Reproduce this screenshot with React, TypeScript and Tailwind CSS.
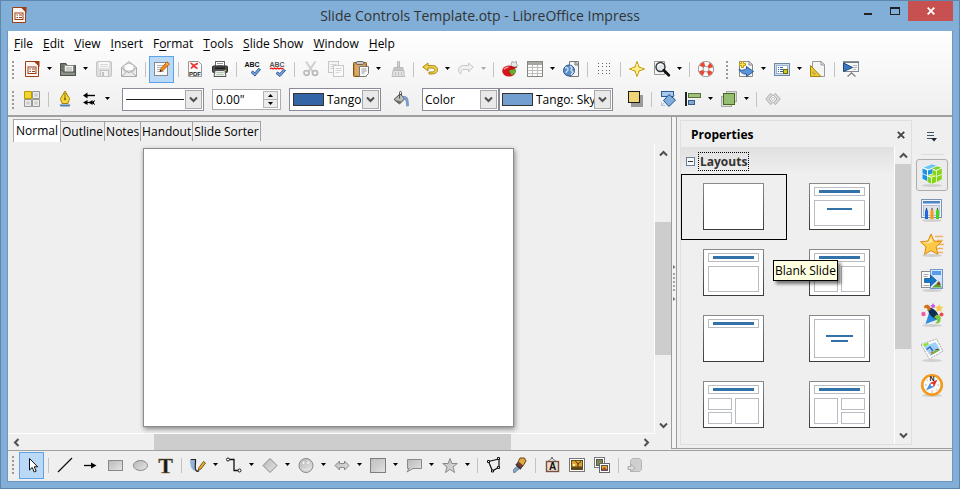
import React from "react";
import type { ReactNode } from "react";

/* ---------- icon drawings, 16 x 16 ---------- */

const docIcon = (
  <>
    <path d="M1.5 .5H11L14.5 4.500V15.500H1.500z" fill="#fdf6f2" stroke="#9c3f16" />
    <path d="M9.500 0H15.500V6z" fill="#9c3f16" />
    <rect x="4" y="6" width="8" height="6.500" fill="#fff" stroke="#9c3f16" />
    <path d="M5.500 8H7M8 8h3M5.500 10.500H7M8 10.500h3" stroke="#9c3f16" />
  </>
);

const icons: Record<string, ReactNode> = {
  impress: docIcon,
  open: (
    <>
      <path d="M.5 2.500H6l1.500 2H15.500V14.500H.500z" fill="#6f756c" stroke="#4c5149" />
      <path d="M4.500 4.500h9v7h-9z" fill="#f4f4f2" stroke="#8b8f88" />
      <path d="M6 7h6M6 9h6" stroke="#a8aba5" />
      <path d="M.5 9.500h2l1 1.500h12v3.500H.500z" fill="#8b9186" stroke="#4c5149" />
    </>
  ),
  save: (
    <>
      <rect x=".5" y=".5" width="15" height="15" rx="1.500" fill="#dedede" stroke="#c4c4c4" />
      <rect x="3" y="1" width="10" height="6" fill="#fafafa" />
      <path d="M4 3.500h8M4 5.500h8" stroke="#d8d8d8" />
      <rect x="4.500" y="9.500" width="8" height="6" fill="#f2f2f2" stroke="#c4c4c4" />
      <rect x="6" y="11" width="2" height="4" fill="#c0c0c0" />
    </>
  ),
  mail: (
    <>
      <path d="M.5 6.500L8 .5l7.500 6v9H.500z" fill="#ededed" stroke="#aaa" />
      <path d="M3 4.500L8 2l5 2.500V10H3z" fill="#fff" stroke="#bbb" />
      <path d="M.5 6.500L8 12l7.500-5.500M.5 15.500L6 10.500M15.500 15.500L10 10.500" fill="none" stroke="#aaa" />
    </>
  ),
  edit: (
    <>
      <rect x=".5" y="1.500" width="13" height="13" fill="#fafafa" stroke="#888" />
      <path d="M3 4.500h7M3 6.500h5M3 8.500h3M3 10.500h7" stroke="#b5b5b5" />
      <path d="M6 10.500l1-3L13 .8l2.500 2.200L9 9.500z" fill="#f08a1c" stroke="#b0560a" strokeWidth=".8" />
      <path d="M5.500 11l.8-2.500 1.600 1.500z" fill="#222" />
      <path d="M12 2l2.300 2" stroke="#f9c37d" />
    </>
  ),
  pdf: (
    <>
      <path d="M1.500 .5h10l3 3v12h-13z" fill="#fbfbfb" stroke="#999" />
      <path d="M3.500 2c2 .5 3 4 7 5.500M11 2.500C8.500 3 6 5 4 7.500" fill="none" stroke="#e33" strokeWidth="1.700" />
      <text x="8" y="14.500" textAnchor="middle" className="font-['Liberation_Sans',sans-serif] text-[6px] font-bold" fill="#222">PDF</text>
    </>
  ),
  print: (
    <>
      <rect x="3.500" y=".5" width="9" height="6" fill="#fff" stroke="#666" />
      <path d="M5 2.500h6M5 4.500h6" stroke="#999" />
      <rect x=".5" y="5" width="15" height="6.500" rx="1" fill="#4c4f4b" stroke="#2b2d2a" />
      <rect x="3" y="6.500" width="10" height="1.500" fill="#1b1c1b" />
      <path d="M3 9.500h10l1 6H2z" fill="#e9ece7" stroke="#555" />
      <path d="M4.500 11.500h7M4.500 13.500h7" stroke="#b4c6ab" />
      <rect x="12.500" y="9" width="1.500" height="1" fill="#a8e060" />
    </>
  ),
  spell: (
    <>
      <text x="-.5" y="6" className="font-['Liberation_Sans',sans-serif] text-[7px] font-bold" fill="#111">ABC</text>
      <path d="M6 11.500l1.800-1.500 2 2L13.500 7.500l2 1L10 15z" fill="#76a3dc" stroke="#28508c" strokeWidth=".9" />
    </>
  ),
  spellauto: (
    <>
      <text x="-.5" y="6" className="font-['Liberation_Sans',sans-serif] text-[7px] font-bold" fill="#555">ABC</text>
      <path d="M0 8l1.500-1L3 8l1.500-1L6 8l1.500-1L9 8l1.500-1L12 8l1.500-1" fill="none" stroke="#f11" strokeWidth="1.100" />
      <path d="M6 12.500l1.800-1.500 2 1.500L13.500 8.500l2 1L10 15.500z" fill="#76a3dc" stroke="#28508c" strokeWidth=".9" />
    </>
  ),
  cut: (
    <>
      <path d="M3 .5l6.500 10M12.500 .5L5.500 10.500" stroke="#cfcfcf" strokeWidth="2" />
      <ellipse cx="3.500" cy="12" rx="2.500" ry="2.300" fill="none" stroke="#bbb" strokeWidth="1.800" />
      <ellipse cx="12" cy="12" rx="2.500" ry="2.300" fill="none" stroke="#bbb" strokeWidth="1.800" />
    </>
  ),
  copy: (
    <>
      <rect x=".5" y=".5" width="10" height="11" fill="#f5f5f5" stroke="#c8c8c8" />
      <path d="M2.500 3.500h6M2.500 5.500h6M2.500 7.500h3" stroke="#d5d5d5" />
      <rect x="5.500" y="4.500" width="10" height="11" fill="#fafafa" stroke="#c8c8c8" />
      <path d="M7.500 7.500h6M7.500 9.500h6M7.500 11.500h4" stroke="#d5d5d5" />
    </>
  ),
  paste: (
    <>
      <rect x=".5" y="1.500" width="13" height="14" rx="1" fill="#c98d42" stroke="#7d5216" />
      <rect x="2" y="3.500" width="10" height="11" fill="#dca763" />
      <rect x="3.500" y=".5" width="7" height="3" rx="1" fill="#c9c9c6" stroke="#666" />
      <path d="M6.500 5.500h9v7l-3 3h-6z" fill="#fafafa" stroke="#777" />
      <path d="M8.500 8h5M8.500 10h5M8.500 12h3" stroke="#999" />
    </>
  ),
  brush: (
    <>
      <path d="M8.500 .5h2V6h-2z" fill="#d5d5d5" stroke="#b9b9b9" />
      <path d="M5 6.500h9V9H4.500z" fill="#c8c8c8" stroke="#b9b9b9" />
      <path d="M4 9.500h11v4l1 2H3z" fill="#e2e2e2" stroke="#bdbdbd" />
      <path d="M6.500 11v4M9.500 11v4M12.500 11v4" stroke="#c4c4c4" />
    </>
  ),
  undo: <path d="M.8 6L6 2v2.500h4.500c3 0 5 1.500 5 4.200 0 2.600-2 4.300-5.500 4.300H7v-2h3c1.800 0 2.800-.8 2.800-2s-1-2-2.800-2H6V10z" fill="#eed049" stroke="#a88207" strokeWidth=".9" />,
  redo: <path d="M15.200 6L10.500 2v2.500H6c-3.500 0-5.500 1.500-5.500 4.500 0 1.800.8 3 2.500 4-.5-3 .5-4.500 3-4.500h4.500V11z" fill="#f0f0f0" stroke="#c8c8c8" />,
  chart: (
    <>
      <path d="M9 3.500l1-3 2 1 2.500-1V3l1.500 1.500-2 1.500-4-.5z" fill="#e8e8e8" stroke="#999" strokeWidth=".8" />
      <ellipse cx="7" cy="10" rx="6.800" ry="5.500" fill="#d3151c" />
      <path d="M2 8.500c1-2 3-2.500 4.500-2.300" stroke="#f79a92" strokeWidth="1.500" fill="none" />
      <path d="M7 9.500l6.500-1.500c.5 3-1 5.500-4 6z" fill="#56b92c" />
      <path d="M8 5.500l3 1.500 4-1" stroke="#a30d10" fill="none" />
    </>
  ),
  table: (
    <>
      <rect x=".5" y=".5" width="15" height="15" fill="#fdfdfd" stroke="#84867f" />
      <rect x="1" y="1" width="14" height="3" fill="#a5a7a2" />
      <path d="M1 6.500h14M1 9.500h14M1 12.500h14M5.500 4v11M10.500 4v11" stroke="#bcbeb8" />
    </>
  ),
  globe: (
    <>
      <path d="M6.500 .5h9v15h-9z" fill="#f5f5f5" stroke="#777" />
      <path d="M12 .5v3.500h3.500z" fill="#ddd" stroke="#777" />
      <circle cx="6" cy="9.500" r="5.500" fill="#5b8cc4" stroke="#2c578f" />
      <path d="M2 7c2-1 3 0 3 1.500S3 10 3 12M7 5l2 2-1 2 2 2-2 3" stroke="#c5dcf3" fill="none" strokeWidth="1.500" />
    </>
  ),
  gridDots: <path d="M2 2.500h1M6 2.500h1M10 2.500h1M13 2.500h1M2 5.500h1M6 5.500h1M10 5.500h1M13 5.500h1M2 9.500h1M6 9.500h1M10 9.500h1M13 9.500h1M2 12.500h1M6 12.500h1M10 12.500h1M13 12.500h1" stroke="#666" fill="none" />,
  star4: (
    <>
      <path d="M8 .5L10 6l5.500 2L10 10l-2 5.500L6 10 .5 8 6 6z" fill="#fbe25c" stroke="#c49a0a" />
      <path d="M8 3v10M3 8h10" stroke="#fff7c5" />
    </>
  ),
  zoom: (
    <>
      <path d="M.5 .5h10v13H.500z" fill="#f5f5f5" stroke="#999" />
      <circle cx="6.500" cy="6" r="4.500" fill="#e0e6ea" stroke="#333" strokeWidth="1.400" />
      <path d="M4 5c1-2 3-2 4-1.500" stroke="#fff" fill="none" strokeWidth="1.200" />
      <path d="M9.800 9.300l5 5" stroke="#111" strokeWidth="2.800" strokeLinecap="round" />
    </>
  ),
  help: (
    <>
      <circle cx="8" cy="8" r="5.300" fill="none" stroke="#888" strokeWidth="5.600" />
      <circle cx="8" cy="8" r="5.300" fill="none" stroke="#fafafa" strokeWidth="4" />
      <circle cx="8" cy="8" r="5.300" fill="none" stroke="#e84530" strokeWidth="4" strokeDasharray="4 4.325" strokeDashoffset="-2.200" />
    </>
  ),
  newSlide: (
    <>
      <path d="M1.500 .5h10l3 3v12h-13z" fill="#f6f6f6" stroke="#888" />
      <path d="M11 .5V4h3.500" fill="#ddd" stroke="#888" />
      <path d="M1 8c2 2 4.500 1 7.500 0V5.500l7 5-7 5V13C6 13.500 2.500 12 1 8z" fill="#5b94d8" stroke="#1f4f8e" strokeWidth=".9" />
      <path d="M3.500 .5h2v2h2v2h-2v2h-2v-2h-2v-2h2z" fill="#fbe94c" stroke="#bf9c08" />
    </>
  ),
  layout: (
    <>
      <rect x=".5" y="2.500" width="15" height="12" fill="#c9dcf0" stroke="#71869c" />
      <rect x="2.500" y="4.500" width="11" height="8" fill="#fafdff" stroke="#9db3c9" />
      <path d="M4 6.500h1M6 6.500h3M4 8.500h1M6 8.500h3M4 10.500h1M6 10.500h3" stroke="#34689e" />
      <rect x="9.500" y="8.500" width="4" height="4" fill="#d3c917" stroke="#6b6c05" />
    </>
  ),
  ruler: (
    <>
      <path d="M2.500 .5h9l3 3v12h-12z" fill="#f4f4f4" stroke="#999" />
      <path d="M11 .5V4h3.500" fill="#ddd" stroke="#999" />
      <path d="M.5 4.500l10.500 11H.500z" fill="#eccb38" stroke="#a8830a" />
      <path d="M3 10.500l2.500 2.500H3z" fill="#fff" stroke="#a8830a" strokeWidth=".7" />
    </>
  ),
  present: (
    <>
      <rect x="1.500" y="1.500" width="14" height="9" fill="#f4f6f8" stroke="#848a90" />
      <path d="M0 1h16" stroke="#70767c" strokeWidth="1.600" />
      <path d="M10 4.500h4M10 6.500h4M10 8.500h3" stroke="#b4bac0" />
      <path d="M.5 2l9 4.500-9 4z" fill="#3d78be" stroke="#1b467f" />
      <path d="M8.500 11v2M8.500 12l-4 3.500M8.500 12l4 3.500" stroke="#868686" strokeWidth="1.300" />
    </>
  ),
  displayGrid: (
    <>
      <path d="M8.500 .5h7v7h-7zM.5 8.500h7v7h-7zM8.500 8.500h7v7h-7z" fill="#ebebe8" stroke="#969893" />
      <path d="M.5 .5h7v7h-7z" fill="#f2d530" stroke="#c19a00" />
      <path d="M10.500 2.500h3v3h-3zM2.500 10.500h3v3h-3zM10.500 10.500h3v3h-3z" fill="#ccc" />
    </>
  ),
  pen: (
    <>
      <path d="M8 0l4.500 7.500c0 2-1.500 3-1.500 5H5c0-2-1.500-3-1.500-5z" fill="#f6d63a" stroke="#a57f08" />
      <path d="M8 2v5" stroke="#8d7208" />
      <circle cx="8" cy="8" r="1.200" fill="#8d7208" />
      <path d="M2.500 13.500h11l-1 2h-9z" fill="#4c7cb4" />
    </>
  ),
  lineEnds: (
    <>
      <path d="M3 4.500h10" stroke="#000" strokeWidth="1.400" />
      <path d="M5.500 1.500v6L1 4.500z" fill="#000" />
      <path d="M3 11.500h9" stroke="#000" strokeWidth="1.200" />
      <path d="M5.500 9v5L1 11.500zM10.500 9v5L6.500 11.500z" fill="#000" />
      <path d="M10 11.500l3-2M10 11.500l3 2" stroke="#000" />
    </>
  ),
  bucket: (
    <>
      <path d="M1 8.500L7 3l5 4.500-5.500 5.500z" fill="#b9bcb6" stroke="#454842" />
      <path d="M6.500 7.500V1.500c0-1.500 2-1.500 2 0v3" fill="none" stroke="#555" />
      <path d="M1.500 9l5 3.500 2-2z" fill="#686c65" />
      <path d="M10 5.500c4-.5 5.500 1 5.500 9.500h-2c0-5-1-7-3-7.500z" fill="#7ba0d6" stroke="#5274a8" strokeWidth=".5" />
    </>
  ),
  shadow: (
    <>
      <rect x="4" y="4" width="12" height="12" fill="#9a9a9a" />
      <rect x="1.500" y=".5" width="11" height="11" fill="#efd573" stroke="#1b1b1b" />
    </>
  ),
  rotate: (
    <>
      <rect x="1.500" y=".5" width="12" height="5" fill="#a9c7ea" stroke="#2c5b96" />
      <path d="M9 3.500l6.500 5.500-6.500 6.500-5.500-6z" fill="#82ade0" stroke="#244f88" />
      <path d="M1.500 11v3.500h4M1.500 14.500l3-3M13.500 5l2-1" stroke="#b4c6da" fill="none" />
    </>
  ),
  align: (
    <>
      <path d="M1 1v14" stroke="#222" strokeWidth="2" />
      <rect x="3.500" y="2.500" width="12" height="4" fill="#a4c07d" stroke="#56743a" />
      <rect x="3.500" y="9.500" width="6" height="4" fill="#86a9d1" stroke="#365b8a" />
    </>
  ),
  arrange: (
    <>
      <rect x="5.500" y=".5" width="10" height="10" fill="#dcdcdc" stroke="#aaa" />
      <rect x=".5" y="5.500" width="10" height="10" fill="#dcdcdc" stroke="#aaa" />
      <rect x="2.500" y="2.500" width="11" height="11" fill="#97bd70" stroke="#44691f" />
    </>
  ),
  glueEdit: (
    <>
      <path d="M5.500 2.500L.8 8l4.700 5.500L7.500 12 4 8l3.500-4zM10.500 2.500L15.200 8l-4.700 5.500L8.500 12 12 8 8.500 4z" fill="#ddd" stroke="#a5a5a5" strokeWidth=".9" />
      <path d="M6 8h1M9 8h1M8 6v1M8 9v1" stroke="#999" />
    </>
  ),
  select: <path d="M5.500 1.500v11.500l2.700-2.500 2 4.500 2-.9-2-4.300h3.500z" fill="#fff" stroke="#111" />,
  line: <path d="M1 15L15 1" stroke="#111" strokeWidth="1.200" />,
  arrow: (
    <>
      <path d="M2 8.500h8" stroke="#000" strokeWidth="1.300" />
      <path d="M9 5.500v6l5.500-3z" fill="#000" />
    </>
  ),
  rect: <rect x="1.500" y="3.500" width="14" height="10" fill="url(#greyFill)" stroke="#898989" />,
  ellipse: <ellipse cx="8.500" cy="8.500" rx="7" ry="5" fill="url(#greyFill)" stroke="#898989" />,
  text: <text x="8.500" y="15.500" textAnchor="middle" className="font-['Liberation_Serif',serif] text-[22px] font-bold" fill="#171717" stroke="#8d7f4c" strokeWidth=".4">T</text>,
  curve: (
    <>
      <path d="M0 2h5l1 12c-4 0-6-4-6-12z" fill="#94b2d6" />
      <path d="M1 2.500h4.500c.5 4-1.500 8 .5 11 1 1 2 1 3 0" fill="none" stroke="#222" strokeWidth="1.200" />
      <path d="M8 13.500l1-3 4.500-6 2 1.500-4.500 6z" fill="#efad20" stroke="#583c08" strokeWidth=".8" />
    </>
  ),
  connector: (
    <>
      <path d="M3.500 2.500h4.500v11h4" fill="none" stroke="#111" strokeWidth="1.300" />
      <circle cx="2" cy="2.500" r="1.500" fill="#fff" stroke="#111" />
      <circle cx="13.500" cy="13.500" r="1.500" fill="#fff" stroke="#111" />
    </>
  ),
  diamond: <path d="M8 1.500L15 8.500l-7 7-7-7z" fill="url(#greyFill)" stroke="#898989" />,
  smiley: (
    <>
      <circle cx="8" cy="8.500" r="7" fill="url(#greyFill)" stroke="#898989" />
      <path d="M5.500 4.500v2.500M10 4.500v2.500" stroke="#f4f4f4" strokeWidth="1.600" />
      <path d="M4 11c2 2 6 2 8 0" fill="none" stroke="#e6e6e6" />
    </>
  ),
  blockArrow: <path d="M1 8.500l4.500-4.500v2.500h5V4L15 8.500 10.500 13v-2.500h-5V13z" fill="url(#greyFill)" stroke="#898989" />,
  flowchart: (
    <>
      <rect x=".5" y="1.500" width="15" height="14" fill="url(#greyFill)" stroke="#7e7e7e" />
      <path d="M4.500 2v13M1 5.500h14" stroke="#cdcdcd" />
    </>
  ),
  callout: <path d="M1.500 2.500h14v9H7L1 15l2-3.500H1.500z" fill="url(#greyFill)" stroke="#898989" />,
  star: <path d="M8 1.500l1.800 5h5.500l-4.300 3.500 1.500 5.500L8 12.300 3.500 15.500 5 10 .7 6.500h5.500z" fill="url(#greyFill)" stroke="#898989" />,
  points: (
    <>
      <path d="M2.500 4.500l10.500-2.500v8l-6.500 4z" fill="none" stroke="#111" strokeWidth="1.200" />
      <path d="M1.500 3.500h2v2h-2zM11.500 .5h2v2h-2zM11.500 9.500h2v2h-2zM5.500 13h2v2h-2z" fill="#fff" stroke="#111" />
    </>
  ),
  glue: (
    <>
      <path d="M9 1l4.500 0 1.500 3-3 5-5-4z" fill="#e2a63e" stroke="#6d4514" />
      <path d="M7 5l5 4-3 3-3.500-3.500z" fill="#a12f24" stroke="#444" />
      <path d="M5 7l5 5" stroke="#3d3d3d" strokeWidth="2" fill="none" />
      <path d="M5.500 9.500l-3 3v3h1.500l4-3.500z" fill="#83a6c8" stroke="#47678a" strokeWidth=".6" />
    </>
  ),
  fontwork: (
    <>
      <path d="M4 4.500L8 1l4 3.500" fill="none" stroke="#777" />
      <circle cx="8" cy="1" r="1" fill="#666" />
      <rect x="2.500" y="4.500" width="12" height="10" fill="#e8ddcc" stroke="#795142" strokeWidth="1.400" />
      <text x="8.500" y="13" textAnchor="middle" className="font-['Liberation_Sans',sans-serif] text-[10px] font-bold" fill="#111">A</text>
    </>
  ),
  picture: (
    <>
      <rect x=".5" y="1.500" width="15" height="13" fill="#fff" stroke="#777" />
      <rect x="2.500" y="3.500" width="11" height="9" fill="#dfa032" stroke="#5f4c18" />
      <path d="M3 9.500h10v3H3z" fill="#5c471c" />
      <path d="M9 10V6.500L6.500 4.500M9 7l3-2.500" stroke="#4a3510" fill="none" />
      <circle cx="5" cy="8" r="1.300" fill="#fff09a" />
    </>
  ),
  gallery: (
    <>
      <rect x=".5" y=".5" width="10" height="10" fill="#fff" stroke="#777" />
      <rect x="2.500" y="2.500" width="6" height="6" fill="#7a8b4d" stroke="#555" />
      <rect x="5.500" y="6.500" width="10" height="9" fill="#fff" stroke="#666" />
      <rect x="7.500" y="8.500" width="6" height="5" fill="#e0ab36" stroke="#555" />
      <path d="M8 12l2.500-2 3 3H8z" fill="#b54b2a" />
    </>
  ),
  extrusion: (
    <>
      <path d="M3.500 3.500l2-2h7l2 2v9l-2 2h-9z" fill="#cfcfcf" stroke="#b5b5b5" />
      <path d="M1 9.500h3V7.500l4 3.500-4 3.500v-2H1z" fill="#ddd" stroke="#aaa" />
    </>
  ),
};

/* ---------- sidebar deck icons, 24 x 24 ---------- */

const floor = <ellipse cx="12" cy="22.500" rx="10" ry="1.500" fill="#cfcfcf" />;

const decks: { name: string; drawing: ReactNode }[] = [
  {
    name: "Properties",
    drawing: (
      <>
        {floor}
        <path d="M12 1l9.500 3.500v12L12 21.500 2.500 16.500v-12z" fill="#fff" />
        <path d="M12 1.200l4.500 1.600-8 3.400-5-1.600z" fill="#68c5f4" />
        <path d="M2.500 5.500l4.500 1.700v5l-4.500-2zM2.500 11l4.500 2v5l-4.500-2.200zM8 7.500l4.500-1.800v4.500L8 12z" fill="#1c94e6" />
        <path d="M7.500 13.500l3.500 1.200v6l-3.500-1.700zM17 3.300l4.500 1.500-5.500 2.200-4-1.500z" fill="#7fd12c" />
        <path d="M17 7.500l4.800-2V11L17 13zM12.500 7l3.800 1v5l-3.800-1.500zM17 13.800l4.800-2v4.500l-4.800 2.700zM11.800 14.500l4.500-1.500v6l-4.500 2z" fill="#86d418" />
        <path d="M7.500 12.500l4.500-1.500 4 1.500-4.500 1.500z" fill="#b6ea62" />
      </>
    ),
  },
  {
    name: "Slide Transition",
    drawing: (
      <>
        {floor}
        <rect x="1.500" y="1.500" width="20" height="18" fill="#f1f5fa" stroke="#7c93b4" />
        <rect x="3" y="3" width="17" height="2.500" fill="#5184c5" />
        <rect x="3.500" y="7.500" width="16" height="10" fill="#dfe4ec" stroke="#b5bfcf" />
        <path d="M5 21v-8l1.500-3 1.500 3v8z" fill="#2468d6" />
        <path d="M10.500 21v-8l1.500-3 1.500 3v8z" fill="#ef9a1a" />
        <path d="M16 21v-8l1.500-3 1.500 3v8z" fill="#3ed71d" />
        <path d="M5.700 11.500l.8-2 .8 2zM11.200 11.500l.8-2 .8 2zM16.700 11.500l.8-2 .8 2z" fill="#333" />
      </>
    ),
  },
  {
    name: "Custom Animation",
    drawing: (
      <>
        {floor}
        <path d="M15 3.500h8M17 7.500h6M18 11.500h6M17 15.500h6M17 19.500h6" stroke="#f3b25c" strokeWidth="1.400" />
        <path d="M11 1l3 7 7.500.8-5.500 5 1.800 7.500L11 17.500 4.500 21.500 6 14 .5 8.800 8 8z" fill="#ffc845" stroke="#dc8a14" />
        <path d="M11 4l2 5-6 1.500-4-1 5.500-.5z" fill="#ffe9a3" />
      </>
    ),
  },
  {
    name: "Master Pages",
    drawing: (
      <>
        {floor}
        <rect x="1.500" y="3.500" width="11" height="16" fill="#fafafa" stroke="#8e8e8e" />
        <path d="M3.500 6.500h5M3.500 8.500h4M3.500 17.500h6" stroke="#a9a9a9" />
        <rect x="10.500" y="1.500" width="12" height="19" fill="#d4e6fb" stroke="#7299c6" />
        <path d="M12 3h9v4h-9z" fill="#5c9be8" />
        <path d="M12 19.500l6-5 4 5z" fill="#5c9f2a" />
        <path d="M17 15l2-2 2 4h-4z" fill="#7a4d24" />
        <path d="M4.500 10.500h6V7l6 5.500-6 5.500v-3.500h-6z" fill="#1676c8" stroke="#0c4c88" strokeWidth=".7" />
      </>
    ),
  },
  {
    name: "Styles and Formatting",
    drawing: (
      <>
        {floor}
        <path d="M10 7l9 9-13.500 5z" fill="#2c8de0" />
        <ellipse cx="13.500" cy="10.500" rx="3.500" ry="7" transform="rotate(-42 13.500 10.500)" fill="#0e2f55" />
        <path d="M4 3c4-3 7 0 6.500 4l-3 1c0-3-1-3.500-3-2.500z" fill="#d07217" />
        <path d="M16 12c4-1 6 3 4 7-2 2-4 1.500-5 1 3-1 3-4-1-5.500z" fill="#7cc63b" />
        <path d="M19 1l1.200 2.600 3.300.3-2.500 2 .8 3L19 7.500 16.200 9l.8-3.200-2.400-2 3.300-.2z" fill="#fbc84a" />
        <path d="M13 0l1 2 1.500.3-1 1.200.2 1.800L13 4.500l-1.700.8.200-1.800-1.200-1.200L12 2z" fill="#c455e8" />
        <circle cx="3.500" cy="11" r="2.200" fill="#ee5ba8" />
        <circle cx="21.500" cy="11.500" r="2" fill="#f04b4b" />
      </>
    ),
  },
  {
    name: "Gallery",
    drawing: (
      <>
        {floor}
        <path d="M1 6.500L16.500 1l6.500 12-13.500 8z" fill="#fff" stroke="#a9a9a9" strokeDasharray="2 1" />
        <path d="M4 8.500L15.500 4l5 8-10 6z" fill="#9fd0fa" />
        <path d="M10 17.500l5-5 5.500-.5z" fill="#65b52a" />
        <path d="M3 6.500l5-2 1 1.800-5 2.500z" fill="#8fe02c" />
        <path d="M6.500 11.500l3.500-2.500 3 4" fill="none" stroke="#2f6fb3" strokeWidth="1.500" />
        <path d="M14 12l4-1.500 1 1.500z" fill="#8b3b1c" />
        <circle cx="12" cy="14.500" r="1.300" fill="#e07a1c" />
      </>
    ),
  },
  {
    name: "Navigator",
    drawing: (
      <>
        {floor}
        <circle cx="12" cy="12" r="9.800" fill="#fafafa" stroke="#f39a1c" strokeWidth="2.600" />
        <path d="M12 17v3M4.500 12H7M17 12h2.500M6.500 6.500l1.500 1.500M16 16l1.500 1.500" stroke="#b8c0c8" />
        <text x="12" y="7.500" textAnchor="middle" className="font-['Liberation_Sans',sans-serif] text-[7px] font-bold" fill="#222">N</text>
        <path d="M17.500 6.500l-3.500 7.500-4-4z" fill="#e0362c" />
        <path d="M6 17.500l4-7.500 4 4z" fill="#4e90dc" />
        <circle cx="12" cy="12" r="1.300" fill="#fff" />
      </>
    ),
  },
];

/* ---------- toolbar parts ---------- */

function Glyph({ name }: { name: string }) {
  return (
    <svg viewBox="0 0 16 16" className="size-4 shrink-0 overflow-visible" fill="none" aria-hidden="true">
      {icons[name]}
    </svg>
  );
}

function Tool({ name, active = false }: { name: string; active?: boolean }) {
  return (
    <button
      type="button"
      aria-label={name}
      aria-pressed={active}
      className={
        active
          ? "flex h-[27px] w-[25px] shrink-0 items-start border border-[#5da3e8] bg-[#b9d9f7] pl-1 pt-1"
          : "flex h-[27px] w-[25px] shrink-0 items-start pl-[5px] pt-[5px]"
      }
    >
      <Glyph name={name} />
    </button>
  );
}

function Drop({ muted = false }: { muted?: boolean }) {
  return (
    <button type="button" aria-label="More" className="flex h-[27px] w-[11px] shrink-0 items-start justify-center pt-[11px]">
      <svg viewBox="0 0 5 3" className="h-[3px] w-[5px]" aria-hidden="true">
        <path d="M0 0h5L2.500 3z" fill={muted ? "#a8a8a8" : "#000"} />
      </svg>
    </button>
  );
}

function Sep() {
  return <div className="mx-[3px] box-content h-[15px] w-px shrink-0 border-r border-[#c3c3c3]" />;
}

function Grip() {
  return <div className="mr-1 h-[18px] w-[3px] shrink-0 bg-[repeating-linear-gradient(to_bottom,#9a9a9a_0_2px,transparent_2px_4px)] bg-[length:2px_100%] bg-no-repeat" />;
}

/* "|" is a separator, "v" a drop-down arrow, a leading "*" marks a pressed button */
function Tools({ items }: { items: string }) {
  return (
    <>
      {items.split(" ").map((item, i) => {
        if (item === "|") return <Sep key={i} />;
        if (item === "v") return <Drop key={i} />;
        if (item === "~v") return <Drop key={i} muted />;
        if (item[0] === "*") return <Tool key={i} name={item.slice(1)} active />;
        return <Tool key={i} name={item} />;
      })}
    </>
  );
}

function Chevron({ className }: { className?: string }) {
  return (
    <svg viewBox="0 0 9 7" className={"h-[7px] w-[9px] " + (className ?? "")} aria-hidden="true">
      <path d="M1 1.500l3.500 3.500L8 1.500" fill="none" stroke="#4f4f4f" strokeWidth="2" />
    </svg>
  );
}

function Combo({ label, value, width, pad, children }: { label: string; value: string; width: string; pad: string; children?: ReactNode }) {
  return (
    <div className={"relative h-[23px] shrink-0 border border-[#8a8a98] bg-white " + width}>
      <select aria-label={label} defaultValue={value} className={"h-full w-full appearance-none overflow-hidden bg-transparent pr-[18px] outline-none " + pad}>
        <option>{value}</option>
      </select>
      {children}
      <span className="pointer-events-none absolute inset-y-px right-px flex w-[17px] items-center justify-center border border-[#a9a9a9] bg-[#e9e9e9]">
        <Chevron />
      </span>
    </div>
  );
}

/* ---------- layout previews ---------- */

type Box = [number, number, number, number];
const head: Box = [5, 4, 50, 8];
const headBar: Box = [10, 7, 41, 3];

const layouts: { name: string; boxes: Box[]; bars: Box[] }[] = [
  { name: "Blank Slide", boxes: [], bars: [] },
  { name: "Title Slide", boxes: [head, [5, 17, 50, 25]], bars: [headBar, [18, 25, 25, 2]] },
  { name: "Title, Content", boxes: [head, [5, 17, 50, 25]], bars: [headBar] },
  { name: "Title and 2 Content", boxes: [head, [5, 17, 23, 25], [32, 17, 23, 25]], bars: [headBar] },
  { name: "Title Only", boxes: [head], bars: [headBar] },
  { name: "Centered Text", boxes: [[5, 4, 50, 38]], bars: [[17, 20, 27, 2], [22, 25, 17, 2]] },
  { name: "Title, 2 Content and Content", boxes: [head, [5, 17, 23, 11], [5, 31, 23, 11], [32, 17, 23, 25]], bars: [headBar] },
  { name: "Title, Content and 2 Content", boxes: [head, [5, 17, 23, 25], [32, 17, 23, 11], [32, 31, 23, 11]], bars: [headBar] },
];

function LayoutPreview({ boxes, bars }: { boxes: Box[]; bars: Box[] }) {
  return (
    <svg viewBox="0 0 61 47" className="h-[47px] w-[61px]" aria-hidden="true">
      <rect x=".5" y=".5" width="60" height="46" fill="#fff" stroke="url(#frame)" />
      {boxes.map(([x, y, w, h], i) => (
        <rect key={i} x={x + 0.5} y={y + 0.5} width={w} height={h} fill="#fff" stroke="#b9bcc2" />
      ))}
      {bars.map(([x, y, w, h], i) => (
        <rect key={i} x={x} y={y} width={w} height={h} fill="#3272a8" />
      ))}
    </svg>
  );
}

/* ---------- window parts ---------- */

function TitleBar() {
  return (
    <header className="flex h-[30px] shrink-0 items-start">
      <div className="flex w-[134px] pl-[10px] pt-[6px]">
        <svg viewBox="0 0 16 16" className="size-4" aria-hidden="true">
          <defs>
            <linearGradient id="greyFill" x1="0" y1="0" x2="1" y2="1">
              <stop offset="0" stopColor="#b9b9b9" />
              <stop offset="1" stopColor="#e4e4e4" />
            </linearGradient>
            <linearGradient id="frame" x1="0" y1="0" x2="0" y2="1">
              <stop offset="0" stopColor="#8a8a8a" />
              <stop offset="1" stopColor="#3c3c3c" />
            </linearGradient>
          </defs>
          {docIcon}
        </svg>
      </div>
      <h1 className="flex-1 pt-[5px] text-center text-[14px] leading-5 text-[#333]">Slide Controls Template.otp - LibreOffice Impress</h1>
      <div className="flex w-[134px] justify-end pr-[6px]">
        <button type="button" aria-label="Minimize" className="flex h-5 w-[27px] items-end justify-center pb-[6px]">
          <span className="h-[2px] w-2 bg-[#222]" />
        </button>
        <button type="button" aria-label="Maximize" className="flex h-5 w-[27px] items-center justify-center">
          <span className="h-2 w-[10px] border border-t-2 border-[#222]" />
        </button>
        <button type="button" aria-label="Close" className="flex h-5 w-[45px] items-center justify-center bg-[#c75050]">
          <svg viewBox="0 0 8 8" className="size-2" aria-hidden="true">
            <path d="M.7 .7l6.600 6.600M7.300 .7L.7 7.300" stroke="#fff" strokeWidth="1.800" />
          </svg>
        </button>
      </div>
    </header>
  );
}

const menus: [string, string, string][] = [
  ["", "F", "ile"],
  ["", "E", "dit"],
  ["", "V", "iew"],
  ["", "I", "nsert"],
  ["F", "o", "rmat"],
  ["", "T", "ools"],
  ["", "S", "lide Show"],
  ["", "W", "indow"],
  ["", "H", "elp"],
];

function MenuBar() {
  return (
    <nav className="flex h-[25px] items-center gap-[10px] pl-[6px]">
      {menus.map(([before, key, after]) => (
        <button key={key} type="button" className="whitespace-nowrap">
          {before}
          <span className="underline underline-offset-2">{key}</span>
          {after}
        </button>
      ))}
    </nav>
  );
}

function Swatch({ className }: { className: string }) {
  return <span className={"pointer-events-none absolute top-1 h-[13px] w-[31px] border border-[#333] " + className} />;
}

function SpinField() {
  return (
    <div className="ml-2 flex h-[21px] w-[69px] shrink-0 border border-[#abadb3] bg-white">
      <input aria-label="Line width" defaultValue={'0.00"'} className="w-0 flex-1 bg-transparent pl-[3px] outline-none" />
      <div className="my-px mr-[2px] flex w-[15px] flex-col border border-[#b5b5b5] bg-[#ececec]">
        <button type="button" aria-label="Increase" className="flex flex-1 items-center justify-center border-b border-[#b5b5b5]">
          <svg viewBox="0 0 5 3" className="h-[3px] w-[5px]" aria-hidden="true"><path d="M0 3h5L2.500 0z" /></svg>
        </button>
        <button type="button" aria-label="Decrease" className="flex flex-1 items-center justify-center">
          <svg viewBox="0 0 5 3" className="h-[3px] w-[5px]" aria-hidden="true"><path d="M0 0h5L2.500 3z" /></svg>
        </button>
      </div>
    </div>
  );
}

const viewTabs = ["Outline", "Notes", "Handout", "Slide Sorter"];

function Workspace() {
  return (
    <main className="flex min-w-0 flex-1 flex-col">
      <div role="tablist" className="flex h-[27px] shrink-0 items-start pl-[5px] pt-[2px]">
        <button type="button" role="tab" aria-selected="true" className="h-[23px] border border-b-0 border-[#a5a5a5] bg-white px-[2px]">
          Normal
        </button>
        {viewTabs.map((tab) => (
          <button key={tab} type="button" role="tab" aria-selected="false" className="mt-[2px] h-5 whitespace-nowrap border-r border-t border-[#a2a2a2] px-px leading-[18px]">
            {tab}
          </button>
        ))}
      </div>
      <div className="flex min-h-0 flex-1">
        <div className="flex min-w-0 flex-1 justify-center border-b border-r border-white pb-[6px] pr-[5px] pt-1">
          <div className="aspect-[371/279] h-full border border-[#8b8b8b] bg-white shadow-[1px_2px_5px_rgba(0,0,0,0.45)]" />
        </div>
        <div className="flex w-4 flex-col items-center pb-[5px] pt-[6px]">
          <Chevron className="rotate-180" />
          <div className="flex-[64]" />
          <div className="w-4 flex-[132] bg-[#cdcdcd]" />
          <div className="flex-[66]" />
          <Chevron />
        </div>
      </div>
      <div className="flex h-4 shrink-0 items-center pl-1 pr-5">
        <Chevron className="rotate-90" />
        <div className="flex-[133]" />
        <div className="h-4 flex-[356] bg-[#cdcdcd]" />
        <div className="flex-[131]" />
        <Chevron className="-rotate-90" />
      </div>
    </main>
  );
}

function Splitter() {
  return (
    <div className="flex w-[6px] shrink-0 flex-col items-center justify-center border-x border-[#9c9c9c] bg-[#f4f4f4]">
      <svg viewBox="0 0 4 36" className="h-9 w-1" aria-hidden="true">
        <path d="M1 0l2.500 2L1 4zM1 32l2.500 2L1 36z" fill="#777" />
        <path d="M2 8v20" stroke="#888" strokeWidth="1.500" strokeDasharray="2 2" />
      </svg>
    </div>
  );
}

function PropertiesDeck() {
  return (
    <section className="my-[3px] ml-[3px] flex min-h-0 w-[232px] flex-col border border-[#dfdfdf]">
      <div className="flex h-[26px] shrink-0 items-center justify-between pl-[10px] pr-[5px] pt-[2px]">
        <h2 className="font-bold">Properties</h2>
        <button type="button" aria-label="Close sidebar deck" className="p-px">
          <svg viewBox="0 0 8 8" className="size-2" aria-hidden="true">
            <path d="M.8 .8l6.400 6.400M7.200 .8L.8 7.200" stroke="#444" strokeWidth="1.900" />
          </svg>
        </button>
      </div>
      <div className="flex min-h-0 flex-1">
        <div className="min-w-0 flex-1">
          <div className="flex h-[27px] items-center gap-[2px] bg-linear-to-b from-[#e0e0e0] to-[#efefef] pl-[5px] pt-px">
            <button type="button" aria-label="Collapse Layouts" className="flex size-[9px] items-center justify-center border border-[#6c7f96] bg-[#f4f7fb]">
              <span className="h-px w-[5px] bg-[#333]" />
            </button>
            <h3 className="ml-px border border-dotted border-black px-px font-bold leading-[17px] text-[#333]">Layouts</h3>
          </div>
          <div className="grid w-[212px] grid-cols-2">
            {layouts.map((layout, i) => (
              <div key={layout.name} className="relative h-[66px]">
                <button
                  type="button"
                  aria-label={layout.name}
                  className={i === 0 ? "flex h-full w-full items-start border border-black pl-[21px] pt-2" : "flex h-full w-full items-start pl-[22px] pt-[9px]"}
                >
                  <LayoutPreview boxes={layout.boxes} bars={layout.bars} />
                </button>
                {i === 0 && (
                  <div role="tooltip" className="absolute left-[92px] top-[86px] z-10 whitespace-nowrap border border-black bg-[#ffffe1] px-px leading-[19px] shadow-[3px_3px_3px_rgba(0,0,0,0.5)]">
                    {layout.name}
                  </div>
                )}
              </div>
            ))}
          </div>
        </div>
        <div className="flex w-[17px] flex-col items-center border-l border-white py-[5px]">
          <Chevron className="mb-[5px] rotate-180" />
          <div className="w-4 flex-[186] bg-[#cdcdcd]" />
          <div className="flex-[83]" />
          <Chevron />
        </div>
      </div>
    </section>
  );
}

function DeckBar() {
  return (
    <aside className="flex w-10 shrink-0 flex-col items-center pt-[13px]">
      <button type="button" aria-label="Sidebar settings">
        <svg viewBox="0 0 12 12" className="size-3" aria-hidden="true">
          <path d="M1 2.500h7M1 5.500h7M1 8.500h6" stroke="#44516b" />
          <path d="M5 8h6L8 11.500z" fill="#1d2538" />
        </svg>
      </button>
      <div className="mb-1 mt-3 h-px w-[23px] bg-[#dcdcdc]" />
      <div className="flex flex-col gap-[3px]">
        {decks.map((deck, i) => (
          <button
            key={deck.name}
            type="button"
            aria-label={deck.name}
            className={
              i === 0
                ? "flex size-8 items-center justify-center rounded-[3px] border border-[#adadad] bg-[#ebebeb]"
                : "flex size-8 items-center justify-center"
            }
          >
            <svg viewBox="0 0 24 24" className="size-6" fill="none" aria-hidden="true">
              {deck.drawing}
            </svg>
          </button>
        ))}
      </div>
    </aside>
  );
}

export default function App() {
  return (
    <div className="flex h-screen flex-col overflow-hidden border border-[#5f87ac] bg-[#81afd7] font-['Open_Sans','Noto_Sans',sans-serif] text-[12px] leading-4 text-black">
      <TitleBar />
      <div className="mx-[6px] mb-[6px] flex min-h-0 flex-1 flex-col border border-t-0 border-[#6c98c0] bg-[#efefef]">
        <div className="h-[86px] shrink-0 border-b-2 border-[#a0a0a0] bg-linear-to-b from-white to-[#efefef]">
          <MenuBar />
          <div className="flex h-[27px] items-center pl-1">
            <Grip />
            <Tools items="impress v open v save mail | *edit | pdf print | spell spellauto | cut copy paste v brush | undo v redo ~v | chart table v globe | gridDots | star4 zoom v | help" />
            <div className="w-2 shrink-0" />
            <Grip />
            <Tools items="newSlide v layout v ruler | present" />
          </div>
          <div className="mt-[3px] flex h-[27px] items-center pl-1">
            <Grip />
            <Tools items="displayGrid | pen lineEnds v" />
            <div className="ml-[9px] shrink-0">
              <Combo label="Line style" value="Continuous" width="w-[82px]" pad="pl-[3px] text-transparent">
                <span className="pointer-events-none absolute left-[3px] right-[19px] top-[10px] h-px bg-[#222]" />
              </Combo>
            </div>
            <SpinField />
            <div className="ml-2 mr-[7px] shrink-0">
              <Combo label="Line colour" value="Tango: Sky Blue 1" width="w-[92px]" pad="pl-[37px]">
                <Swatch className="left-[3px] bg-[#3465a4]" />
              </Combo>
            </div>
            <Tools items="bucket" />
            <div className="ml-[9px] mr-[9px] flex shrink-0">
              <Combo label="Area style" value="Color" width="w-[77px]" pad="pl-[2px]" />
              <Combo label="Area colour" value="Tango: Sky Blue 2" width="w-[114px]" pad="pl-[36px]">
                <Swatch className="left-[2px] bg-[#729fcf]" />
              </Combo>
            </div>
            <Tools items="shadow | rotate align v arrange v | glueEdit" />
          </div>
        </div>
        <div className="flex min-h-0 flex-1">
          <Workspace />
          <div className="mb-px flex shrink-0 border-b border-[#9c9c9c]">
            <Splitter />
            <PropertiesDeck />
            <DeckBar />
          </div>
        </div>
        <div className="flex h-[31px] shrink-0 items-center border-t border-[#a0a0a0] pb-[2px] pl-1">
          <Grip />
          <Tools items="*select | line arrow rect ellipse text | curve v connector v diamond v smiley v blockArrow v flowchart v callout v star v | points glue | fontwork picture gallery | extrusion" />
        </div>
      </div>
    </div>
  );
}
